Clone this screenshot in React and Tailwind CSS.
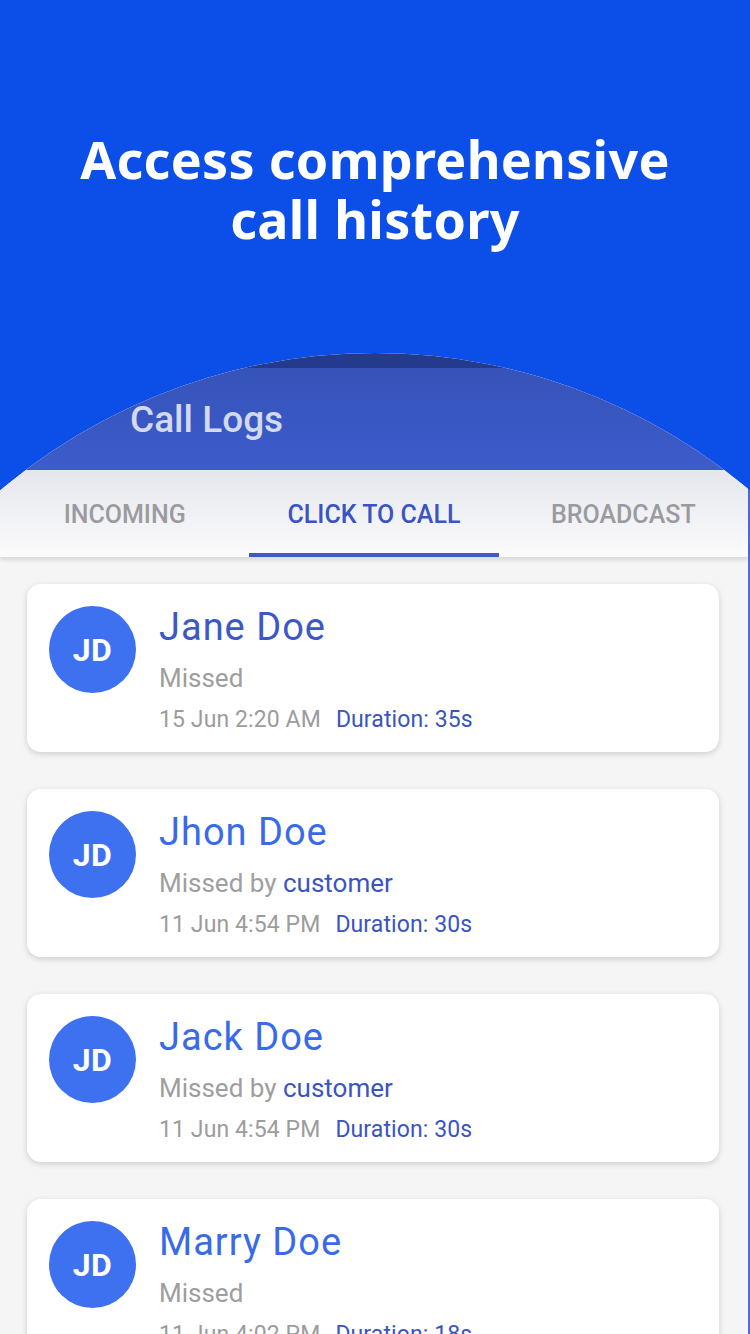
import React from "react";

const calls = [
  { name: "Jane Doe", status: "Missed", by: null, date: "15 Jun 2:20 AM", dur: "Duration: 35s", nameColor: "text-[#3c58c8]" },
  { name: "Jhon Doe", status: "Missed by", by: "customer", date: "11 Jun 4:54 PM", dur: "Duration: 30s", nameColor: "text-[#386ae9]" },
  { name: "Jack Doe", status: "Missed by", by: "customer", date: "11 Jun 4:54 PM", dur: "Duration: 30s", nameColor: "text-[#386ae9]" },
  { name: "Marry Doe", status: "Missed", by: null, date: "11 Jun 4:02 PM", dur: "Duration: 18s", nameColor: "text-[#386ae9]" },
];

function Card({ c }) {
  return (
    <div className="shrink-0 h-[168px] w-[692px] bg-white rounded-[14px] shadow-[0_2px_6px_rgba(0,0,0,0.16)] flex items-start">
      <div className="ml-[22px] mt-[22px] w-[87px] h-[87px] rounded-full bg-[#3d71ef] flex items-center justify-center shrink-0">
        <span className="text-white text-[32px] font-bold leading-none tracking-[0.5px]">JD</span>
      </div>
      <div className="ml-[23px] flex flex-col">
        <div className={`mt-[24px] text-[38px] leading-[38px] tracking-[1px] ${c.nameColor}`}>{c.name}</div>
        <div className="mt-[19px] text-[26px] leading-[26px] text-[#9e9e9e]">
          {c.status}
          {c.by && <span className="text-[#3a55c2]"> {c.by}</span>}
        </div>
        <div className="mt-[17px] text-[23px] leading-[23px] tracking-[0.1px] flex gap-[15px]">
          <span className="text-[#9c9c9c]">{c.date}</span>
          <span className="text-[#3a55c2]">{c.dur}</span>
        </div>
      </div>
    </div>
  );
}

export default function App() {
  const tabs = ["INCOMING", "CLICK TO CALL", "BROADCAST"];
  return (
    <div
      className="w-[750px] h-[1334px] overflow-hidden bg-[#0c4ee8] flex flex-col"
      style={{ fontFamily: "Roboto, 'Noto Sans', sans-serif" }}
    >
      <div
        className="h-[353px] shrink-0 pt-[129px] text-center text-white text-[52px] leading-[60px] font-bold tracking-[0.3px]"
        style={{ fontFamily: "'Noto Sans', 'Open Sans', sans-serif" }}
      >
        <div>Access comprehensive</div>
        <div>call history</div>
      </div>
      <div className="shrink-0 w-[1160px] h-[1160px] -ml-[205px] rounded-full overflow-hidden bg-[#4a6ee6]">
        <div className="ml-[205px] w-[748px] h-full flex flex-col bg-[#f5f5f6]">
          <div className="h-[15px] shrink-0 bg-[#243a8c]" />
          <div className="h-[102px] shrink-0 bg-gradient-to-b from-[#3653b9] to-[#3d5ccb] flex items-center pl-[130px]">
            <span className="text-[37px] leading-[37px] font-medium text-[#d3d9ee]">Call Logs</span>
          </div>
          <div className="h-[88px] shrink-0 flex bg-gradient-to-b from-[#e5e7ed] to-[#fbfbfc] shadow-[0_2px_4px_rgba(0,0,0,0.12)] border-b border-[#dcdcdf]">
            {tabs.map((t, i) => (
              <div key={t} className="flex-1 flex flex-col">
                <div
                  className={`flex-1 flex items-center justify-center pt-[6px] text-[25px] font-medium ${
                    i === 1 ? "text-[#3a54c2]" : "text-[#9b9b9f]"
                  }`}
                >
                  {t}
                </div>
                <div className={`h-[4px] ${i === 1 ? "bg-[#3d5acb]" : "bg-transparent"}`} />
              </div>
            ))}
          </div>
          <div className="flex flex-col gap-[37px] pt-[26px] pl-[27px]">
            {calls.map((c) => (
              <Card key={c.name} c={c} />
            ))}
          </div>
        </div>
      </div>
    </div>
  );
}
